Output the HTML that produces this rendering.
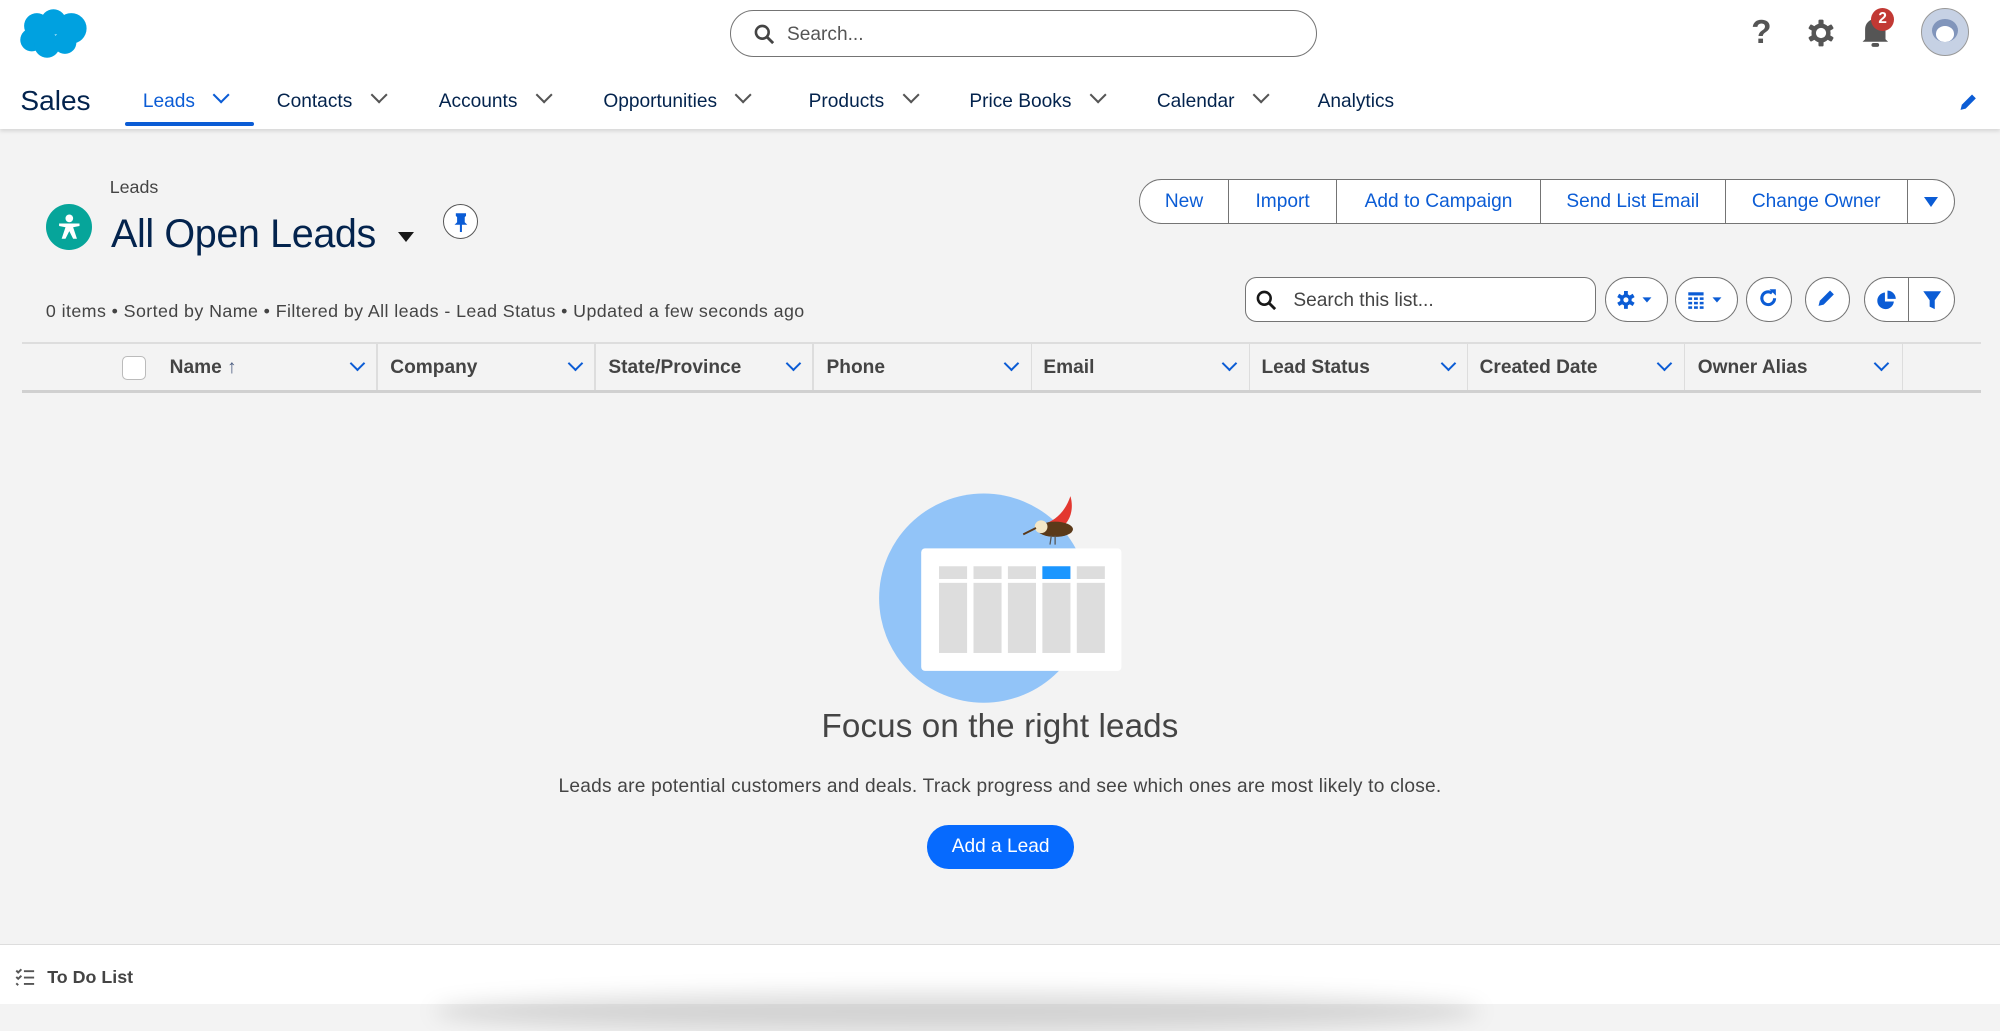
<!DOCTYPE html>
<html><head><meta charset="utf-8">
<style>
html{zoom:1.27551}
body{margin:0;width:1568px;height:786px;position:relative;overflow:hidden;background:#f3f3f3;font-family:"Liberation Sans",Arial,sans-serif;color:#181818}
.a{position:absolute}
.hdr{left:0;top:0;width:1568px;height:101px;background:#fff;box-shadow:0 2px 3px rgba(0,0,0,.12)}
.nav{top:71px;font-size:15px;color:#03234d;white-space:nowrap}
.chev{display:inline-block;width:8px;height:8px;border-right:1.6px solid #555;border-bottom:1.6px solid #555;transform:rotate(45deg);margin-left:16px;position:relative;top:-4px}
.bg{left:893px;top:140px;height:34px;border:1px solid #747474;border-radius:18px;background:#fff;display:flex;overflow:hidden}
.bg div{border-right:1px solid #747474;color:#0b5cd5;font-size:15px;line-height:34px;text-align:center;flex:none}
.ib{top:217px;height:34px;border:1px solid #747474;border-radius:18px;background:#fff}
.th{top:280px;font-size:15px;font-weight:bold;color:#444}
.cv{top:281px;width:7px;height:7px;border-right:1.6px solid #0b5cd5;border-bottom:1.6px solid #0b5cd5;transform:rotate(45deg)}
.dv{top:270px;width:1px;height:36px;background:#ddd}
</style></head><body>
<div class="a hdr"></div>
<svg class="a" style="left:15px;top:6px" width="55" height="40" viewBox="0 0 55 40"><g fill="#00a1e0"><circle cx="14" cy="14" r="10"/><circle cx="27" cy="11" r="10"/><circle cx="41" cy="16" r="12"/><circle cx="10" cy="25" r="9"/><circle cx="22" cy="29" r="10"/><circle cx="36" cy="27" r="9"/></g></svg>
<div class="a" style="left:572px;top:8px;width:459px;height:35px;border:1px solid #747474;border-radius:19px;background:#fff"></div>
<svg class="a" style="left:591px;top:19px" width="16" height="16" viewBox="0 0 16 16"><circle cx="6.5" cy="6.5" r="5" fill="none" stroke="#444" stroke-width="2"/><path d="M10 10l5 5" stroke="#444" stroke-width="2.2"/></svg>
<div class="a" style="left:617px;top:19px;font-size:15px;color:#555">Search...</div>
<div class="a" style="left:1373px;top:11px;font-size:26px;font-weight:bold;color:#555">?</div>
<svg class="a" style="left:1417px;top:15px" width="22" height="22" viewBox="0 0 22 22"><g fill="#555"><circle cx="11" cy="11" r="7.5"/><rect x="9" y="0.5" width="4" height="21" rx="1"/><rect x="9" y="0.5" width="4" height="21" rx="1" transform="rotate(60 11 11)"/><rect x="9" y="0.5" width="4" height="21" rx="1" transform="rotate(120 11 11)"/></g><circle cx="11" cy="11" r="4" fill="#fff"/></svg>
<svg class="a" style="left:1458px;top:12px" width="24" height="26" viewBox="0 0 24 26"><path d="M4 19V11a8 8 0 0116 0v8l2 2H2z" fill="#555"/><rect x="9" y="22" width="6" height="3" rx="1.5" fill="#555"/></svg>
<div class="a" style="left:1467px;top:6px;width:18px;height:18px;border-radius:50%;background:#c23934;color:#fff;font-size:12px;font-weight:bold;text-align:center;line-height:18px">2</div>
<div class="a" style="left:1506px;top:6px;width:36px;height:36px;border-radius:50%;border:1px solid #999;background:#c6d1e4;overflow:hidden"><div class="a" style="left:8px;top:8px;width:20px;height:18px;border-radius:50%;background:#8195bb"></div><div class="a" style="left:11px;top:14px;width:14px;height:12px;border-radius:50%;background:#fff"></div></div>
<div class="a" style="left:16px;top:67px;font-size:22px;color:#03234d">Sales</div>
<div class="a nav" style="left:112px;color:#0b5cd5">Leads<span class="chev" style="border-color:#0b5cd5"></span></div>
<div class="a" style="left:98px;top:96px;width:101px;height:3px;background:#0b5cd5;border-radius:2px"></div>
<div class="a nav" style="left:217px">Contacts<span class="chev"></span></div>
<div class="a nav" style="left:344px">Accounts<span class="chev"></span></div>
<div class="a nav" style="left:473px">Opportunities<span class="chev"></span></div>
<div class="a nav" style="left:634px">Products<span class="chev"></span></div>
<div class="a nav" style="left:760px">Price Books<span class="chev"></span></div>
<div class="a nav" style="left:907px">Calendar<span class="chev"></span></div>
<div class="a nav" style="left:1033px">Analytics</div>
<svg class="a" style="left:1535px;top:72px" width="16" height="16" viewBox="0 0 16 16"><path d="M2 14l1-4 8-8 3 3-8 8z" fill="#0b5cd5"/></svg>

<div class="a" style="left:86px;top:139px;font-size:14px;color:#444">Leads</div>
<div class="a" style="left:36px;top:160px;width:36px;height:36px;border-radius:50%;background:#06a59a"></div>
<svg class="a" style="left:42px;top:166px" width="24" height="24" viewBox="0 0 24 24"><circle cx="12" cy="5" r="3" fill="#fff"/><path d="M4 9h16v2l-5 1 3 9h-3l-3-6-3 6H6l3-9-5-1z" fill="#fff"/></svg>
<div class="a" style="left:87px;top:166px;font-size:31px;color:#03234d;letter-spacing:-0.3px">All Open Leads</div>
<div class="a" style="left:312px;top:182px;border-left:7px solid transparent;border-right:7px solid transparent;border-top:8px solid #181818"></div>
<div class="a" style="left:347px;top:160px;width:26px;height:26px;border:1px solid #555;border-radius:50%;background:#fff"></div>
<svg class="a" style="left:354px;top:166px" width="14" height="16" viewBox="0 0 14 16"><path d="M3 1h8v2l-1 1v4l2 2H2l2-2V4L3 3z M6.2 10h1.6v6H6.2z" fill="#0b5cd5"/></svg>

<div class="a bg"><div style="width:69px">New</div><div style="width:84px">Import</div><div style="width:159px">Add to Campaign</div><div style="width:144px">Send List Email</div><div style="width:142px">Change Owner</div><div style="border:0;width:36px"><span style="display:inline-block;border-left:6px solid transparent;border-right:6px solid transparent;border-top:8px solid #0b5cd5"></span></div></div>

<div class="a" style="left:36px;top:236px;font-size:14px;color:#444;letter-spacing:0.32px">0 items • Sorted by Name • Filtered by All leads - Lead Status • Updated a few seconds ago</div>
<div class="a" style="left:976px;top:217px;width:274px;height:34px;border:1px solid #747474;border-radius:9px;background:#fff"></div>
<svg class="a" style="left:985px;top:227px" width="16" height="16" viewBox="0 0 16 16"><circle cx="6.5" cy="6.5" r="5" fill="none" stroke="#181818" stroke-width="2"/><path d="M10 10l5 5" stroke="#181818" stroke-width="2.2"/></svg>
<div class="a" style="left:1014px;top:227px;font-size:15px;color:#444">Search this list...</div>
<div class="a ib" style="left:1258px;width:48px"></div>
<svg class="a" style="left:1268px;top:228px" width="30" height="14" viewBox="0 0 30 14"><g fill="#0b5cd5"><circle cx="7" cy="7" r="4.5"/><rect x="5.5" y="0" width="3" height="14"/><rect x="5.5" y="0" width="3" height="14" transform="rotate(60 7 7)"/><rect x="5.5" y="0" width="3" height="14" transform="rotate(120 7 7)"/><path d="M20 5h7l-3.5 4z"/></g><circle cx="7" cy="7" r="2" fill="#fff"/></svg>
<div class="a ib" style="left:1313px;width:48px"></div>
<svg class="a" style="left:1323px;top:228px" width="30" height="14" viewBox="0 0 30 14"><g fill="#0b5cd5"><rect x="1" y="1" width="12" height="2.5"/><rect x="1" y="5" width="3" height="2"/><rect x="5.5" y="5" width="3" height="2"/><rect x="10" y="5" width="3" height="2"/><rect x="1" y="8.5" width="3" height="2"/><rect x="5.5" y="8.5" width="3" height="2"/><rect x="10" y="8.5" width="3" height="2"/><rect x="1" y="12" width="3" height="2"/><rect x="5.5" y="12" width="3" height="2"/><rect x="10" y="12" width="3" height="2"/><path d="M20 5h7l-3.5 4z"/></g></svg>
<div class="a ib" style="left:1369px;width:34px"></div>
<svg class="a" style="left:1378px;top:226px" width="16" height="16" viewBox="0 0 16 16"><path d="M13 8a5 5 0 11-2-4" fill="none" stroke="#0b5cd5" stroke-width="2.4"/><path d="M9 1h5v5z" fill="#0b5cd5"/></svg>
<div class="a ib" style="left:1415px;width:34px"></div>
<svg class="a" style="left:1424px;top:226px" width="16" height="16" viewBox="0 0 16 16"><path d="M2 14l1-4 8-8 3 3-8 8z" fill="#0b5cd5"/></svg>
<div class="a ib" style="left:1461px;width:70px"></div>
<div class="a" style="left:1496px;top:218px;width:1px;height:34px;background:#747474"></div>
<svg class="a" style="left:1471px;top:227px" width="16" height="16" viewBox="0 0 16 16"><path d="M7 2a6.5 6.5 0 107 7H7z" fill="#0b5cd5"/><path d="M9 0.5v6.5h6.5A6.5 6.5 0 009 0.5z" fill="#0b5cd5"/></svg>
<svg class="a" style="left:1507px;top:227px" width="16" height="16" viewBox="0 0 16 16"><path d="M1 1h14l-5 7v7l-4-2V8z" fill="#0b5cd5"/></svg>

<div class="a" style="left:17px;top:268px;width:1536px;height:2px;background:#ddd"></div>
<div class="a" style="left:17px;top:306px;width:1536px;height:2px;background:#d0d0d0"></div>
<div class="a" style="left:96px;top:279px;width:17px;height:17px;border:1px solid #bbb;border-radius:4px;background:#fff"></div>
<div class="a th" style="left:133px">Name <span style="color:#4a5c80">&#8593;</span></div>
<div class="a th" style="left:306px">Company</div>
<div class="a th" style="left:477px">State/Province</div>
<div class="a th" style="left:648px">Phone</div>
<div class="a th" style="left:818px">Email</div>
<div class="a th" style="left:989px">Lead Status</div>
<div class="a th" style="left:1160px">Created Date</div>
<div class="a th" style="left:1331px">Owner Alias</div>
<div class="a dv" style="left:295px"></div><div class="a dv" style="left:466px"></div><div class="a dv" style="left:637px"></div><div class="a dv" style="left:808px"></div><div class="a dv" style="left:979px"></div><div class="a dv" style="left:1150px"></div><div class="a dv" style="left:1320px"></div><div class="a dv" style="left:1491px"></div>
<div class="a cv" style="left:276px"></div><div class="a cv" style="left:447px"></div><div class="a cv" style="left:618px"></div><div class="a cv" style="left:789px"></div><div class="a cv" style="left:960px"></div><div class="a cv" style="left:1131px"></div><div class="a cv" style="left:1301px"></div><div class="a cv" style="left:1471px"></div>

<svg class="a" style="left:685px;top:385px" width="200" height="170" viewBox="0 0 200 170"><circle cx="86" cy="84" r="82" fill="#92c4f8"/><rect x="37" y="45" width="157" height="96" rx="3" fill="#fff"/><g fill="#ddd"><rect x="51" y="59" width="22" height="10"/><rect x="78" y="59" width="22" height="10"/><rect x="105" y="59" width="22" height="10"/><rect x="159" y="59" width="22" height="10"/><rect x="51" y="72" width="22" height="55"/><rect x="78" y="72" width="22" height="55"/><rect x="105" y="72" width="22" height="55"/><rect x="132" y="72" width="22" height="55"/><rect x="159" y="72" width="22" height="55"/></g><rect x="132" y="59" width="22" height="10" fill="#1b96ff"/><path d="M154 4c3 10 0 22-10 26l-12-4c10-2 18-10 22-22z" fill="#e3372f"/><ellipse cx="142" cy="30" rx="14" ry="6" fill="#5b3a1a"/><circle cx="131" cy="28" r="5" fill="#f3e7c8"/><path d="M127 29l-10 5" stroke="#5b3a1a" stroke-width="1.5"/><path d="M139 35l-1 7M142 35l0 7" stroke="#555"/></svg>
<div class="a" style="left:0;width:1568px;top:555px;text-align:center;font-size:26px;color:#444;letter-spacing:0.1px">Focus on the right leads</div>
<div class="a" style="left:0;width:1568px;top:608px;text-align:center;font-size:15px;color:#444;letter-spacing:0.18px">Leads are potential customers and deals. Track progress and see which ones are most likely to close.</div>
<div class="a" style="left:727px;top:647px;width:115px;height:34px;border-radius:17px;background:#066afe;color:#fff;font-size:15px;text-align:center;line-height:34px">Add a Lead</div>

<div class="a" style="left:0;top:740px;width:1568px;height:46px;background:#fff;border-top:1px solid #ddd"></div>
<div class="a" style="left:340px;top:778px;width:820px;height:30px;border-radius:50%;background:rgba(0,0,0,.13);filter:blur(8px)"></div>
<svg class="a" style="left:12px;top:759px" width="16" height="14" viewBox="0 0 16 14"><g stroke="#555" stroke-width="1.5" fill="none"><path d="M1 2l1.5 1.5L5 1M1 7l1.5 1.5L5 6M1 12l1.5 1.5"/><path d="M7 2.5h8M7 7.5h8M7 12.5h8"/></g></svg>
<div class="a" style="left:37px;top:758px;font-size:14px;font-weight:bold;color:#444">To Do List</div>
</body></html>
